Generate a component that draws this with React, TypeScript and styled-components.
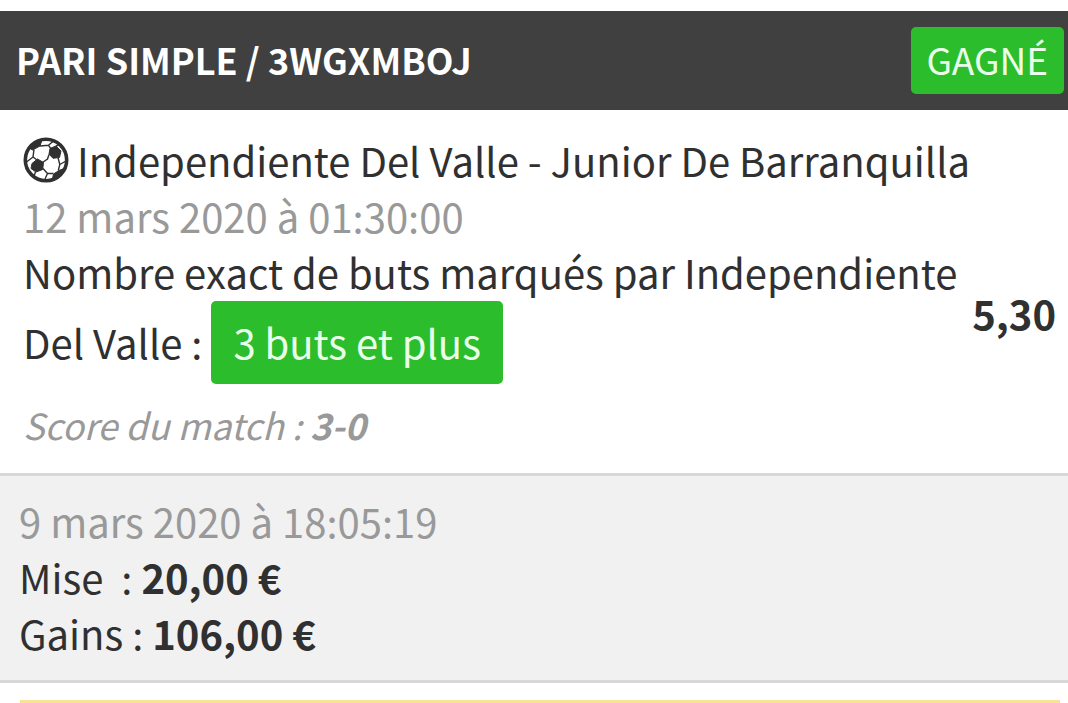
import React from 'react';
import styled, { createGlobalStyle } from 'styled-components';

const GlobalStyle = createGlobalStyle`
  * { box-sizing: border-box; }
  body {
    margin: 0;
    background: #fff;
    color: #303030;
    font-family: "Noto Sans CJK SC", "Noto Sans", sans-serif;
    font-size: 40px;
    line-height: 56px;
  }
`;

const Ticket = styled.article`
  padding-top: 11px;
  overflow-x: hidden;
`;

const Header = styled.header`
  display: flex;
  align-items: flex-start;
  justify-content: space-between;
  padding: 16px 4px 16px 16px;
  background: #404040;
`;

const Title = styled.h1`
  margin: 0;
  color: #fff;
  font-size: 36px;
  line-height: 64px;
  font-weight: 700;
`;

const Status = styled.span`
  padding: 0 16px 3px;
  border-radius: 5px;
  background: #2bbd2b;
  color: #eaffea;
  font-size: 37px;
  line-height: 64px;
`;

const Bet = styled.section`
  display: flex;
  align-items: center;
  justify-content: space-between;
  padding: 22px 12px 21px 23px;
`;

const Details = styled.div`
  flex: 1;
  min-width: 0;
`;

const Match = styled.h2`
  display: flex;
  align-items: center;
  gap: 8px;
  margin: 0;
  font-size: 40px;
  font-weight: 400;
  white-space: nowrap;
`;

const Ball = styled.svg`
  flex: none;
  width: 46px;
  height: 46px;
`;

const When = styled.time`
  display: block;
  color: #999;
`;

const Market = styled.p`
  margin: 0;
`;

const Pick = styled.span`
  display: inline-block;
  margin-top: 1px;
  padding: 0 22px;
  border-radius: 5px;
  background: #2bbd2b;
  color: #eaffea;
  line-height: 83px;
`;

const Score = styled.p`
  margin: 12px 0 0;
  color: #999;
  font-size: 36px;
  font-style: italic;
`;

const Odds = styled.strong`
  padding-top: 42px;
  font-weight: 700;
`;

const Summary = styled.footer`
  padding: 17px 19px 19px;
  border: solid #d8d8d8;
  border-width: 3px 0;
  background: #f1f1f1;
`;

const Amount = styled.p`
  margin: 0;
  white-space: pre;
`;

const Notice = styled.hr`
  margin: 17px 8px 0 20px;
  border: 0;
  border-top: 3px solid #fbe297;
`;

export default function App() {
  return (
    <>
      <GlobalStyle />
      <Ticket>
        <Header>
          <Title>PARI SIMPLE / 3WGXMBOJ</Title>
          <Status>GAGNÉ</Status>
        </Header>
        <Bet>
          <Details>
            <Match>
              <Ball viewBox="0 0 46 46" aria-hidden="true">
                <circle cx="23" cy="23" r="20.7" fill="#fff" stroke="#303030" strokeWidth="3.6" />
                <g fill="#303030" stroke="#303030" strokeLinejoin="round">
                  <path d="M27 11.5L33 9l5 5-1.5 6.5-6.5.8-4-4.3z" />
                  <path d="M9 26.5l5.500-4.500 6 3.500-.8 7L13 35l-5-3.500z" />
                  <path d="M6.500 11L13 4l6-1-2 6-7.500 4z" />
                  <path d="M36 33.500l5-2-4 8-8 4.500 1.500-7z" />
                  <path d="M2.500 26l2.500 5 2 5-4-5z" />
                </g>
                <path
                  d="M17 9l8.500-.8 2.500 4M25.500 8.200L31 3.500M33 9l3.500-1.500M11 12.500L10 20l4 3M10 20l-6.500 5M26 17.500L24.500 22l-5 3.500M35 20.500l1.800 7-1.500 6M36.800 27.500L43 24M20 31.500l4.500 5h6M24.500 36.500L22 42M12.500 35l-1.500 4"
                  fill="none"
                  stroke="#303030"
                  strokeWidth="1.4"
                />
              </Ball>
              Independiente Del Valle - Junior De Barranquilla
            </Match>
            <When>12 mars 2020 à 01:30:00</When>
            <Market>
              Nombre exact de buts marqués par Independiente Del Valle : <Pick>3 buts et plus</Pick>
            </Market>
            <Score>
              Score du match : <b>3-0</b>
            </Score>
          </Details>
          <Odds>5,30</Odds>
        </Bet>
        <Summary>
          <When>9 mars 2020 à 18:05:19</When>
          <Amount>Mise  : <b>20,00 €</b></Amount>
          <Amount>Gains : <b>106,00 €</b></Amount>
        </Summary>
        <Notice />
      </Ticket>
    </>
  );
}
